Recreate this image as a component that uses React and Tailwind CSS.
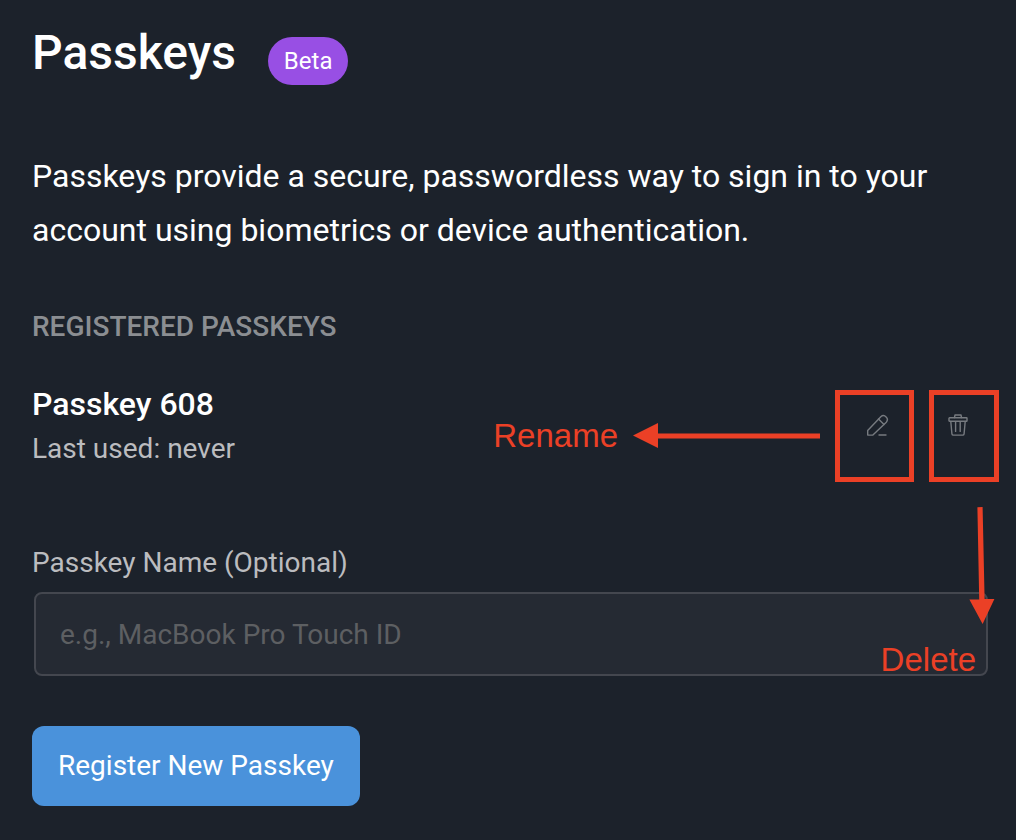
import { useState } from 'react';

const PencilIcon = () => (
    <svg className="w-6 h-6" viewBox="0 0 24 24" fill="none" stroke="currentColor" strokeWidth="1.4" strokeLinecap="round" strokeLinejoin="round">
        <path d="M2.7 22.1V17.6L15.8 3.7A3.9 3.9 0 0 1 21.3 9.2L7.9 22.1Z" />
        <path d="M13.5 6.1L19 11.4" />
        <path d="M14 22H21" />
    </svg>
);

const TrashIcon = () => (
    <svg className="w-6 h-6" viewBox="0 0 24 24" fill="none" stroke="currentColor" strokeWidth="1.4" strokeLinecap="round" strokeLinejoin="round">
        <rect x="3" y="4.7" width="18" height="3.6" rx="0.6" />
        <path d="M8.5 4.5L9 2H15L15.5 4.5" />
        <path d="M4.8 8.5L5.9 20.8Q6.1 22.1 7.4 22.1H16.6Q17.9 22.1 18.1 20.8L19.2 8.5" />
        <path d="M9.6 9V18.4M14.2 9V18.4" />
    </svg>
);

const App = () => {
    const [name, setName] = useState('');
    const passkeys = [{ id: 608, name: 'Passkey 608', lastUsed: 'never' }];

    return (
        <main className="min-h-screen bg-[#1c222b] pt-[21px] pb-8 pl-8 pr-[17px] font-['Roboto',sans-serif] text-white">
            <header className="flex items-end gap-8">
                <h1 className="text-[48px] leading-[64px] font-medium">Passkeys</h1>
                <span className="rounded-full bg-[#984fe4] px-4 text-[24px] leading-[48px]">Beta</span>
            </header>

            <p className="mt-16 mr-4 text-[32px] leading-[54px]">
                Passkeys provide a secure, passwordless way to sign in to your account using biometrics or device authentication.
            </p>

            <h2 className="mt-[50px] text-[28px] leading-[40px] font-medium uppercase text-[#8b8e92]">Registered Passkeys</h2>

            {passkeys.map(passkey => (
                <div key={passkey.id} className="mt-[35px] flex items-start justify-between">
                    <div>
                        <h3 className="text-[32px] leading-[44px] font-medium">{passkey.name}</h3>
                        <p className="text-[28px] leading-[46px] text-[#bbbcbf]">Last used: {passkey.lastUsed}</p>
                    </div>

                    <div className="mt-2 flex items-center gap-[15px] text-[#eb4026]">
                        <span className="font-['Liberation_Sans',sans-serif] text-[33px] leading-[40px]">Rename</span>
                        <svg className="w-[187px] h-[26px]" viewBox="0 0 187 26" fill="currentColor">
                            <path d="M0 12.5L25 0V25Z" />
                            <rect x="24" y="10.5" width="163" height="5" />
                        </svg>
                        <button aria-label="Rename passkey" className="flex h-[92px] w-[79px] items-start border-5 border-[#eb4026] pt-[18px] pl-[25px] text-[#777b80]">
                            <PencilIcon />
                        </button>
                        <div className="relative">
                            <button aria-label="Delete passkey" className="flex h-[92px] w-[70px] items-start border-5 border-[#eb4026] pt-[18px] pl-3 text-[#777b80]">
                                <TrashIcon />
                            </button>
                            <svg className="pointer-events-none absolute top-full right-1 z-10 mt-6 w-[26px] h-[118px]" viewBox="0 0 26 118" fill="currentColor">
                                <path d="M8.4 1.3L13.6 1L15.6 93H25.4L13.6 118L0.4 93.4H10.2Z" />
                            </svg>
                        </div>
                    </div>
                </div>
            ))}

            <form className="mt-[61px]" onSubmit={e => e.preventDefault()}>
                <label htmlFor="passkey-name" className="block text-[28px] leading-[40px] text-[#bbbcbf]">
                    Passkey Name (Optional)
                </label>
                <div className="relative mt-[9px] ml-0.5 mr-[11px]">
                    <input
                        id="passkey-name"
                        type="text"
                        value={name}
                        onChange={e => setName(e.target.value)}
                        placeholder="e.g., MacBook Pro Touch ID"
                        className="block h-[84px] w-full rounded-lg border-2 border-[#44474f] bg-[#252a33] px-6 text-[28px] placeholder:text-[#5d5f62]"
                    />
                    <span className="pointer-events-none absolute right-3 -bottom-1 font-['Liberation_Sans',sans-serif] text-[33px] leading-[40px] text-[#eb4026]">
                        Delete
                    </span>
                </div>
                <button type="submit" className="mt-[50px] h-20 rounded-xl bg-[#4a92db] px-[26px] text-[28px]">
                    Register New Passkey
                </button>
            </form>
        </main>
    );
};

export default App;
